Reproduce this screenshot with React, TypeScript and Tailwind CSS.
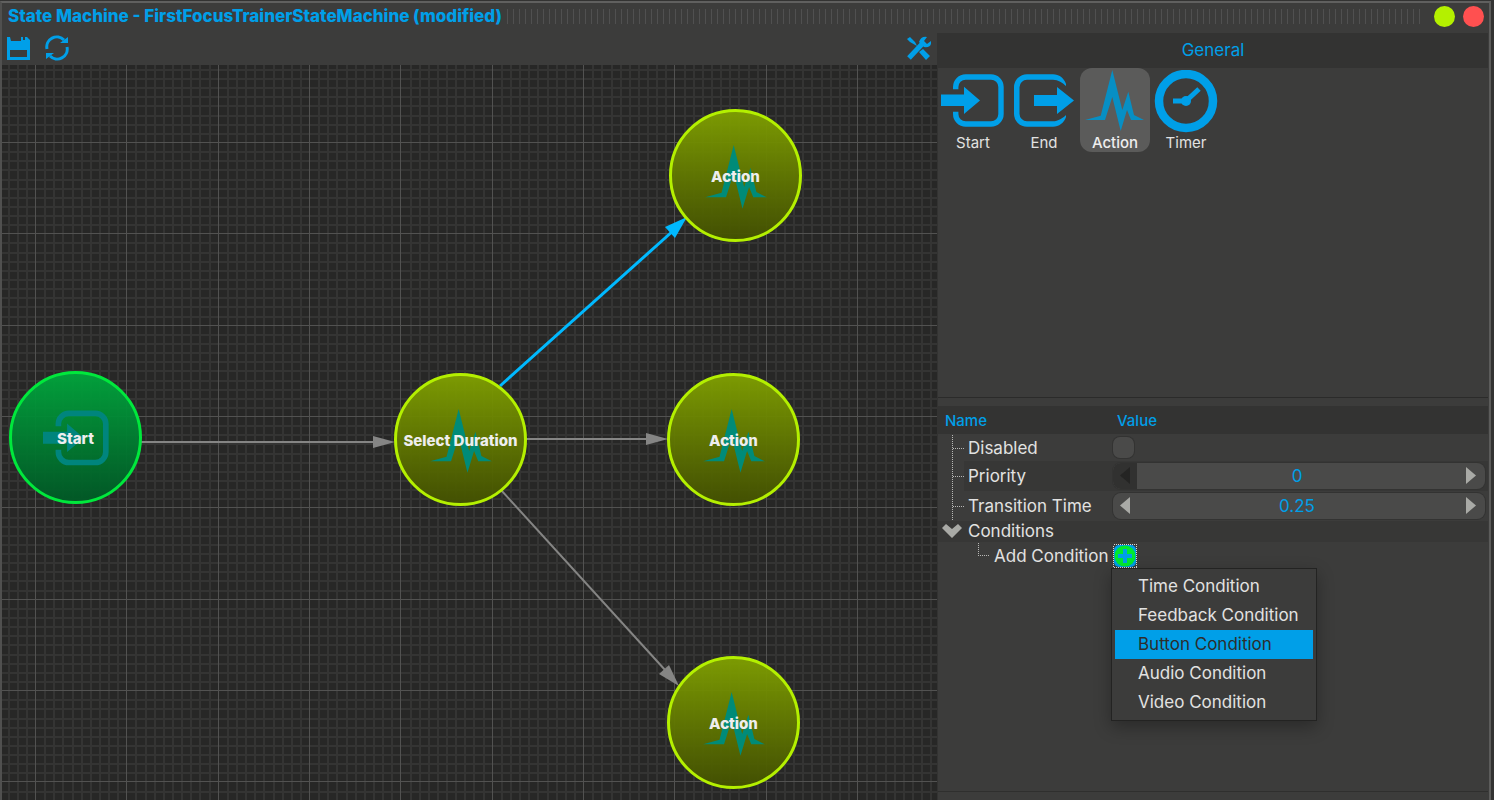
import { useState } from "react";

const CANVAS_W = 2400;
const CANVAS_H = 1600;
const PITCH = 9.135;

const PULSE = "M2 50 L17.700 45.700 L29.300 0 L39.300 40 L45.300 21.700 L51 45 L61 50 L48 50 L44 40 L37.700 61 L29.300 27 L22 50 Z";

const NODES = [
  { id: "start", label: "Start", left: "left-[7px]", top: "top-[306px]", kind: "start" },
  { id: "select", label: "Select Duration", left: "left-[392px]", top: "top-[308px]", kind: "action" },
  { id: "a1", label: "Action", left: "left-[667px]", top: "top-[44px]", kind: "action" },
  { id: "a2", label: "Action", left: "left-[665px]", top: "top-[308px]", kind: "action" },
  { id: "a3", label: "Action", left: "left-[665px]", top: "top-[591px]", kind: "action" },
];

const PALETTE = ["Start", "End", "Action", "Timer"];
const MENU = ["Time Condition", "Feedback Condition", "Button Condition", "Audio Condition", "Video Condition"];

function StartShape() {
  return (
    <g>
      <path d="M14.700 19.300 V17 A10 10 0 0 1 24.700 7 H50 A10 10 0 0 1 60 17 V44 A10 10 0 0 1 50 54 H24.700 A10 10 0 0 1 14.700 44 V41.700" fill="none" stroke="currentColor" strokeWidth="5.400" />
      <path d="M0 24.500 H23 V16.700 L39 30.500 L23 44 V36 H0 Z" fill="currentColor" />
    </g>
  );
}

function PaletteIcon({ name }: { name: string }) {
  return (
    <svg viewBox="0 0 64 64" className="size-16 shrink-0 text-[#009fe8]" aria-hidden="true">
      {name === "Start" && <StartShape />}
      {name === "End" && (
        <g fill="currentColor">
          <path d="M54 16 V14 C52 8 47 4.300 41 4.300 H15 A13 13 0 0 0 2 17.300 V43.700 A13 13 0 0 0 15 56.700 H41 C47 56.700 52 53 54 47 V45 C51 48 46 51.300 41 51.300 H15 A7.500 7.500 0 0 1 7.500 43.800 V17.200 A7.500 7.500 0 0 1 15 9.700 H41 C46 9.700 51 13 54 16 Z" />
          <path d="M22 25 H45 V17 L62 30.500 L45 44 V36 H22 Z" />
        </g>
      )}
      {name === "Action" && <path d={PULSE} fill="#078fc4" />}
      {name === "Timer" && (
        <g fill="none" stroke="currentColor">
          <circle cx="32" cy="31" r="27" strokeWidth="8.500" />
          <path d="M19 31 H32 L45 19" strokeWidth="5" />
          <circle cx="32" cy="31" r="5" fill="currentColor" stroke="none" />
        </g>
      )}
    </svg>
  );
}

function Grid() {
  const lines = [];
  const major = [];
  for (let k = -3; 33 + k * PITCH < CANVAS_W; k++) {
    const x = Math.round(33 + k * PITCH);
    if (k % 10 === 0) major.push(<rect key={"v" + k} x={x} y="0" width="1" height={CANVAS_H} />);
    else lines.push(<rect key={"v" + k} x={x} y="0" width="2" height={CANVAS_H} />);
  }
  for (let k = -8; 77 + k * PITCH < CANVAS_H; k++) {
    const y = Math.round(77 + k * PITCH);
    if (k % 10 === 0) major.push(<rect key={"h" + k} x="0" y={y} width={CANVAS_W} height="1" />);
    else lines.push(<rect key={"h" + k} x="0" y={y} width={CANVAS_W} height="2" />);
  }
  return (
    <g shapeRendering="crispEdges">
      <g fill="#343433">{lines}</g>
      <g fill="#525251">{major}</g>
    </g>
  );
}

function Canvas() {
  return (
    <div className="relative min-h-0 flex-1 overflow-hidden bg-[#272726]">
      <svg className="absolute inset-0 size-full" aria-hidden="true">
        <Grid />
        <g stroke="#858584" strokeWidth="2">
          <path d="M139 377 H374" />
          <path d="M524 374 H646" />
          <path d="M499 425 L664 606" />
        </g>
        <g fill="#858584">
          <path d="M371 371 L393 377 L371 383 Z" />
          <path d="M644 368 L666 374 L644 380 Z" />
          <path d="M657 609 L667 600 L677 621 Z" />
        </g>
        <path d="M498 321 L672 165" stroke="#00b9ff" strokeWidth="3" />
        <path d="M663 162 L685 152 L673 173 Z" fill="#00b9ff" />
      </svg>
      {NODES.map((n) => (
        <button
          key={n.id}
          className={
            "absolute flex size-[133px] items-center justify-center rounded-full border-3 pt-[3px] " + n.left + " " + n.top + " " +
            (n.kind === "start"
              ? "border-[#00e83c] bg-linear-to-b from-[#00a53c]/95 to-[#005a26]/95"
              : "border-[#b4f000] bg-linear-to-b from-[#80a000]/95 to-[#445200]/95")
          }
        >
          {n.kind === "start" ? (
            <svg viewBox="0 0 64 64" className="absolute top-[32px] left-[31px] size-[67px] text-[#00857d]" aria-hidden="true">
              <StartShape />
            </svg>
          ) : (
            <svg viewBox="0 0 64 64" className="absolute top-[33px] left-[31px] size-[67px]" aria-hidden="true">
              <path d={PULSE} fill="#008b78" />
            </svg>
          )}
          <span className="relative text-[15px] font-extrabold whitespace-nowrap text-[#eeeeee]">{n.label}</span>
        </button>
      ))}
    </div>
  );
}

function Arrow({ dir, dim }: { dir: "left" | "right"; dim?: boolean }) {
  return (
    <svg viewBox="0 0 10 18" className={"h-[18px] w-[10px] " + (dim ? "text-[#242423]" : "text-[#a9aaa6]")} aria-hidden="true">
      <path d={dir === "left" ? "M10 0 V17 L0 8.500 Z" : "M0 0 V17 L10 8.500 Z"} fill="currentColor" />
    </svg>
  );
}

function NumberField({ id, initial, dim }: { id: string; initial: string; dim?: boolean }) {
  const [value, setValue] = useState(initial);
  return (
    <div className="flex h-[26px] overflow-hidden rounded-lg bg-[#4a4a49] ring-1 ring-[#333332]">
      <button aria-label="Decrease" className={"flex w-6 shrink-0 items-center justify-center " + (dim ? "bg-[#313130]" : "")}>
        <Arrow dir="left" dim={dim} />
      </button>
      <input
        id={id}
        value={value}
        onChange={(e) => setValue(e.target.value)}
        className="min-w-0 flex-1 bg-transparent text-center text-[17px] text-[#009fe8] outline-none"
      />
      <button aria-label="Increase" className="flex w-7 shrink-0 items-center justify-center">
        <Arrow dir="right" />
      </button>
    </div>
  );
}

function Branch() {
  return (
    <svg className="ml-[14px] block h-[30px] w-3" viewBox="0 0 12 30" shapeRendering="crispEdges" aria-hidden="true">
      <path d="M0.500 0 V30 M1 15.500 H12" stroke="#b8b8b6" strokeDasharray="1 1" fill="none" />
    </svg>
  );
}

function AddCondition() {
  const [selected, setSelected] = useState("Button Condition");
  return (
    <div className="relative">
      <button id="add-condition" aria-haspopup="menu" aria-label="Add Condition" className="block size-6">
        <svg viewBox="0 0 24 24" className="size-6" aria-hidden="true">
          <rect x="1" y="1" width="22" height="22" rx="5" fill="#009fe8" />
          <circle cx="12" cy="12" r="10.500" fill="#00ea2e" />
          <path d="M12 5 V19 M5 12 H19" stroke="#009fe8" strokeWidth="4" />
          <rect x="0.500" y="0.500" width="23" height="23" fill="none" stroke="#d8d8d8" strokeDasharray="1 1" shapeRendering="crispEdges" />
        </svg>
      </button>
      <div role="menu" className="absolute top-6 -left-[2px] z-10 w-[206px] border border-[#232322] bg-[#3c3c3b] p-[3px] shadow-[0_6px_16px_rgba(0,0,0,0.3)]">
        {MENU.map((m) => (
          <button
            key={m}
            role="menuitem"
            onClick={() => setSelected(m)}
            className={"block h-[29px] w-full pl-[23px] text-left text-[17px] leading-[29px] whitespace-nowrap " + (m === selected ? "bg-[#009fe8] text-[#2d2d2c]" : "")}
          >
            {m}
          </button>
        ))}
      </div>
    </div>
  );
}

function Properties() {
  return (
    <div className="mt-2 mb-2 min-h-0 flex-1 border-b border-[#2f2f2e]">
      <table className="w-full table-fixed border-collapse text-left text-[17px] leading-5">
        <colgroup>
          <col className="w-[26px]" />
          <col className="w-[148px]" />
          <col />
        </colgroup>
        <thead>
          <tr className="h-7 bg-[#333332] text-[15px] text-[#009fe8]">
            <th colSpan={2} className="p-0 pt-[2px] pl-[7px] font-medium">Name</th>
            <th className="p-0 pt-[2px] pl-[5px] font-medium">Value</th>
          </tr>
        </thead>
        <tbody>
          <tr className="h-[27px]">
            <td className="p-0"><div className="flex h-[27px] items-center overflow-hidden"><Branch /></div></td>
            <td className="p-0 pl-1"><label htmlFor="disabled">Disabled</label></td>
            <td className="p-0 pl-px">
              <input id="disabled" type="checkbox" className="block size-[21px] appearance-none rounded-[7px] bg-[#4a4a49] ring-1 ring-[#333332] checked:bg-[#009fe8]" />
            </td>
          </tr>
          <tr className="h-[30px]">
            <td className="p-0"><Branch /></td>
            <td className="bg-[#373736] p-0 pb-px pl-1"><label htmlFor="priority">Priority</label></td>
            <td className="bg-[#373736] p-0 pr-[3px] pl-px"><NumberField id="priority" initial="0" dim /></td>
          </tr>
          <tr className="h-[30px]">
            <td className="p-0"><Branch /></td>
            <td className="p-0 pb-px pl-1"><label htmlFor="transition">Transition Time</label></td>
            <td className="p-0 pr-[3px] pl-px"><NumberField id="transition" initial="0.25" /></td>
          </tr>
          <tr className="h-[21px] bg-[#373736]">
            <td colSpan={3} className="p-0">
              <button className="flex h-[21px] items-center gap-[6px] pb-px pl-1">
                <svg viewBox="0 0 20 14" className="h-[14px] w-5" aria-hidden="true">
                  <path d="M0 4 L4 0 L10 5 L16 0 L20 4 L10 14 Z" fill="#a9aaa6" />
                </svg>
                Conditions
              </button>
            </td>
          </tr>
          <tr className="h-[27px]">
            <td colSpan={2} className="p-0">
              <div className="flex items-center gap-1 pl-10">
                <svg viewBox="0 0 12 27" className="h-[27px] w-3" shapeRendering="crispEdges" aria-hidden="true">
                  <path d="M0.500 1 V14 M0 13.500 H12" stroke="#b8b8b6" strokeDasharray="1 1" fill="none" />
                </svg>
                <label htmlFor="add-condition" className="whitespace-nowrap">Add Condition</label>
              </div>
            </td>
            <td className="p-0 pl-px"><AddCondition /></td>
          </tr>
        </tbody>
      </table>
    </div>
  );
}

export default function App() {
  return (
    <div className="flex h-screen min-h-0 bg-[#333332] pt-px pr-[3px] font-['Inter',sans-serif] text-[#e2e2e1]">
      <div className="flex min-w-0 flex-1 flex-col border-t-2 border-r-2 border-l-2 border-t-[#60605f] border-r-[#5c5c5b] border-l-[#50504f] bg-[#3c3c3b]">
        <header className="flex h-[30px] shrink-0 items-center gap-[5px] pr-[5px] pb-[3px] pl-[6px]">
          <h1 className="text-[17px] font-extrabold whitespace-nowrap text-[#009fe8]">State Machine - FirstFocusTrainerStateMachine (modified)</h1>
          <div className="h-[15px] min-w-0 flex-1 bg-[repeating-linear-gradient(to_right,#505050_0_1px,transparent_1px_6px)]" />
          <div className="flex gap-2 pl-1">
            <button aria-label="Maximize" className="size-[21px] rounded-full bg-[#b4f000]" />
            <button aria-label="Close" className="size-[21px] rounded-full bg-[#ff5050]" />
          </div>
        </header>
        <main className="flex min-h-0 flex-1">
          <section className="flex min-w-0 flex-1 flex-col">
            <div className="flex h-8 shrink-0 items-center gap-[14px] pr-[6px] pb-[2px] pl-1 text-[#009fe8]">
              <button aria-label="Save">
                <svg viewBox="0 0 24 24" className="size-6" aria-hidden="true">
                  <path fillRule="evenodd" fill="currentColor" d="M1 1 H4 L5 5 H15 V1 H21 L24 4 V24 H1 Z M4 14 V21 H21 V14 Z" />
                  <path d="M17 0 H19 V4 H17 Z" fill="#3c3c3b" />
                </svg>
              </button>
              <button aria-label="Reload">
                <svg viewBox="0 0 26 26" className="size-[26px]" aria-hidden="true">
                  <path d="M3 14 A10 10 0 0 1 20 5 M23 12 A10 10 0 0 1 6 21" fill="none" stroke="currentColor" strokeWidth="3" />
                  <path d="M24 2 V8 H16 Z M2 24 V18 H10 Z" fill="currentColor" />
                </svg>
              </button>
              <button aria-label="Tools" className="ml-auto">
                <svg viewBox="0 0 24 24" className="size-6" aria-hidden="true">
                  <path d="M2 22 L16 7" stroke="currentColor" strokeWidth="5" />
                  <path d="M20 1 L17 5 L20 8 L24 5 Q25 12 17 11 L12 6 Q14 0 20 1 Z M0 3 L3 1 L8 6 L10 10 L3 6 Z M12 16 L16 13 L23 20 L19 24 Z" fill="currentColor" />
                </svg>
              </button>
            </div>
            <Canvas />
          </section>
          <aside className="flex w-[552px] shrink-0 flex-col border-l border-[#333332] pr-px">
            <h2 className="flex h-[35px] shrink-0 items-center justify-center bg-[#333332] text-[17px] text-[#009fe8]">General</h2>
            <div className="flex h-[330px] shrink-0 items-start gap-px border-b border-[#2b2b2a]">
              {PALETTE.map((name) => (
                <button key={name} className={"flex h-[84px] w-[70px] flex-col items-center rounded-xl pt-[2px] " + (name === "Action" ? "bg-[#5b5b5a] font-medium text-[#eeeeee]" : "")}>
                  <PaletteIcon name={name} />
                  <span className="text-[15px] leading-[18px]">{name}</span>
                </button>
              ))}
            </div>
            <Properties />
          </aside>
        </main>
      </div>
    </div>
  );
}
